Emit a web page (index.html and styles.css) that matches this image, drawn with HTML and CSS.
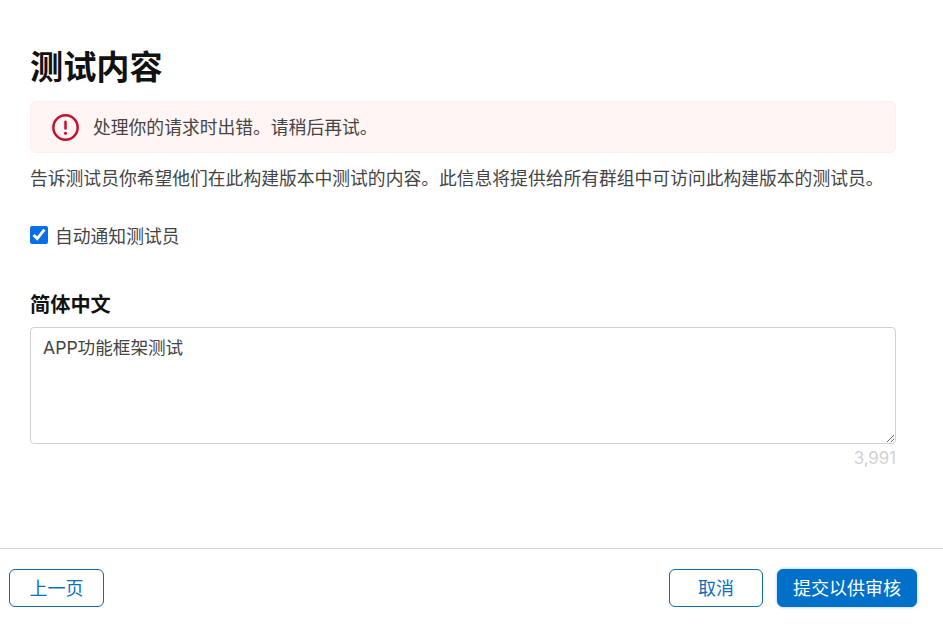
FILE: index.html
```html
<!DOCTYPE html>
<html lang="zh-CN">
<head>
    <meta charset="UTF-8">
    <meta name="viewport" content="width=device-width, initial-scale=1.0">
    <title>测试内容</title>
    <link rel="stylesheet" href="styles.css">
</head>
<body>
    <main class="content">
        <h1>测试内容</h1>
        <div class="alert">
            <svg class="alert-icon" width="27" height="27" viewBox="0 0 28 28" aria-hidden="true">
                <circle cx="14" cy="14" r="12.6" fill="none" stroke="#c5112f" stroke-width="2.6"/>
                <rect x="12.7" y="6.8" width="2.6" height="9.6" rx="1.3" fill="#c5112f"/>
                <circle cx="14" cy="20" r="1.6" fill="#c5112f"/>
            </svg>
            <span class="alert-text">处理你的请求时出错。请稍后再试。</span>
        </div>
        <p class="intro">告诉测试员你希望他们在此构建版本中测试的内容。此信息将提供给所有群组中可访问此构建版本的测试员。</p>
        <label class="notify">
            <input type="checkbox" checked>
            <span>自动通知测试员</span>
        </label>
        <h2>简体中文</h2>
        <textarea class="notes">APP功能框架测试</textarea>
        <div class="counter">3,991</div>
    </main>
    <footer class="actions">
        <button class="btn" type="button">上一页</button>
        <div class="actions-right">
            <button class="btn btn-cancel" type="button">取消</button>
            <button class="btn btn-primary" type="button">提交以供审核</button>
        </div>
    </footer>
</body>
</html>
```

FILE: styles.css
```css
html, body {
    height: 100%;
}

body {
    margin: 0;
    background: #fff;
    color: #444;
    font-family: "Inter", "Noto Sans CJK SC", sans-serif;
    font-size: 17.8px;
    overflow: hidden;
}

.content {
    height: 548px;
    box-sizing: border-box;
    padding: 46px 47px 0 30px;
}

h1 {
    margin: 0 0 12px;
    color: #111;
    font-size: 33.2px;
    line-height: 43px;
    font-weight: 700;
}

.alert {
    display: flex;
    align-items: center;
    gap: 14px;
    height: 52px;
    box-sizing: border-box;
    padding-left: 21px;
    background: #fff5f4;
    border: 1px solid #fcf0ef;
    border-radius: 6px;
}

.alert-text {
    padding-bottom: 2px;
}

.alert-icon {
    flex: none;
}

.intro {
    margin: 13px 0 0;
    line-height: 26px;
    white-space: nowrap;
}

.notify {
    display: flex;
    align-items: center;
    gap: 7px;
    margin-top: 30px;
    height: 26px;
}

.notify input {
    width: 18px;
    height: 18px;
    margin: 0;
    accent-color: #0a6ee6;
}

h2 {
    margin: 43px 0 8px;
    color: #111;
    font-size: 20.2px;
    line-height: 28px;
    font-weight: 700;
}

.notes {
    display: block;
    width: 100%;
    height: 117px;
    box-sizing: border-box;
    padding: 8px 12px;
    border: 1px solid #d0d0d0;
    border-radius: 4px;
    color: #444;
    font-family: inherit;
    font-size: 17.6px;
    line-height: 24px;
    outline: none;
}

.counter {
    margin-top: 3px;
    color: #d2d2d2;
    font-size: 16.8px;
    line-height: 22px;
    text-align: right;
}

.actions {
    display: flex;
    justify-content: space-between;
    height: 78px;
    box-sizing: border-box;
    padding: 20px 26px 0 9px;
    border-top: 1px solid #d2d2d2;
}

.actions-right {
    display: flex;
    gap: 14px;
}

.btn {
    width: 95px;
    height: 38px;
    padding: 0 0 3px;
    background: #fff;
    border: 1px solid #0b6aa8;
    border-radius: 6px;
    color: #0b6fb8;
    font-family: inherit;
    font-size: 18px;
    cursor: pointer;
}

.btn-cancel {
    width: 94px;
}

.btn-primary {
    width: 140px;
    background: #0070c9;
    border-color: #0070c9;
    box-shadow: 0 0 3px rgba(0, 125, 250, 0.45);
    color: #fff;
}
```
